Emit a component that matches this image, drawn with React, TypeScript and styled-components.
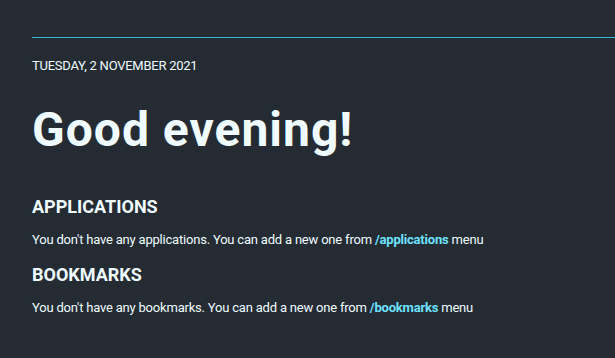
import styled, { createGlobalStyle } from "styled-components";

const GlobalStyle = createGlobalStyle`
  html, body {
    margin: 0;
    padding: 0;
    background-color: #242b33;
  }
  body {
    font-family: Roboto, "Liberation Sans", sans-serif;
    color: #effbff;
  }
`;

const Page = styled.div`
  min-height: 100vh;
  padding: 37px 0 0 32px;
  box-sizing: border-box;
  display: flex;
  flex-direction: column;
`;

const Header = styled.header`
  display: flex;
  flex-direction: column;
  padding-top: 20px;
  border-top: 1px solid #34b9d2;
`;

const DateLine = styled.p`
  margin: 0;
  font-size: 13px;
  line-height: normal;
  letter-spacing: -0.25px;
  text-transform: uppercase;
`;

const Greeting = styled.h1`
  margin: 28px 0 0;
  font-size: 48px;
  font-weight: 700;
  line-height: normal;
  letter-spacing: 1px;
`;

const Section = styled.section<{ $first?: boolean }>`
  margin-top: ${(props) => (props.$first ? "38px" : "17px")};
  display: flex;
  flex-direction: column;
  gap: 15px;
`;

const SectionTitle = styled.h2`
  margin: 0;
  font-size: 18px;
  font-weight: 700;
  line-height: normal;
  text-transform: uppercase;
`;

const Message = styled.p`
  margin: 0;
  font-size: 13px;
  line-height: normal;
  letter-spacing: -0.2px;
`;

const Link = styled.a`
  color: #6ee2ff;
  font-weight: 700;
  text-decoration: none;
`;

const sections = [
  { title: "Applications", what: "applications", path: "/applications" },
  { title: "Bookmarks", what: "bookmarks", path: "/bookmarks" },
];

function App() {
  return (
    <>
      <GlobalStyle />
      <Page>
        <Header>
          <DateLine>Tuesday, 2 November 2021</DateLine>
          <Greeting>Good evening!</Greeting>
        </Header>
        {sections.map((s, i) => (
          <Section key={s.title} $first={i === 0}>
            <SectionTitle>{s.title}</SectionTitle>
            <Message>
              You don't have any {s.what}. You can add a new one from{" "}
              <Link href={s.path}>{s.path}</Link> menu
            </Message>
          </Section>
        ))}
      </Page>
    </>
  );
}

export default App;
